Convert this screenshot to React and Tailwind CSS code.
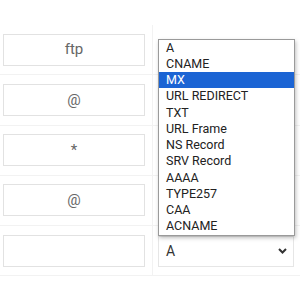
import { useState } from 'react'

const hosts = ['ftp', '@', '*', '@', '']

const types = [
  'A', 'CNAME', 'MX', 'URL REDIRECT', 'TXT', 'URL Frame',
  'NS Record', 'SRV Record', 'AAAA', 'TYPE257', 'CAA', 'ACNAME',
]

function App() {
  const [active] = useState('MX')

  return (
    <div className="w-[300px] h-[300px] bg-white overflow-hidden font-['Roboto',sans-serif]">
      <div className="h-[25px]" />
      {hosts.map((host, i) => (
        <div key={i} className="flex h-[50.25px] border-b border-[#f2f2f2]">
          <div className="w-[153px] border-r border-[#f2f2f2] flex items-center pl-[3px] pr-[7px]">
            <div className="w-full h-[32px] border border-[#e2e2e2] flex items-center justify-center text-[15px] text-[#666]">
              {host}
            </div>
          </div>
          <div className="flex-1 flex items-center pl-[5px] pr-[6px]">
            {i === hosts.length - 1 ? (
              <div className="relative w-full mt-px">
                {/* open list of the select */}
                <div className="absolute bottom-full left-0 w-[137px] bg-white border border-[#9a9a9a] shadow-[1px_2px_4px_rgba(0,0,0,0.25)] text-[12.5px] text-[#222]">
                  {types.map((t) => (
                    <div
                      key={t}
                      className={
                        t === active
                          ? 'h-[16.25px] leading-[16.25px] pl-[7px] bg-[#1b64d4] text-white'
                          : 'h-[16.25px] leading-[16.25px] pl-[7px]'
                      }
                    >
                      {t}
                    </div>
                  ))}
                </div>
                <div className="w-[136px] h-[31px] border border-[#e6e6e6] flex items-center justify-between pl-[7px] pr-[6px] text-[14px] text-[#333]">
                  <span>A</span>
                  <svg width="9" height="6" viewBox="0 0 9 6">
                    <path d="M1 1 L4.5 4.5 L8 1" fill="none" stroke="#333" strokeWidth="2" />
                  </svg>
                </div>
              </div>
            ) : (
              <div className="w-[136px] h-[32px]" />
            )}
          </div>
        </div>
      ))}
    </div>
  )
}

export default App
